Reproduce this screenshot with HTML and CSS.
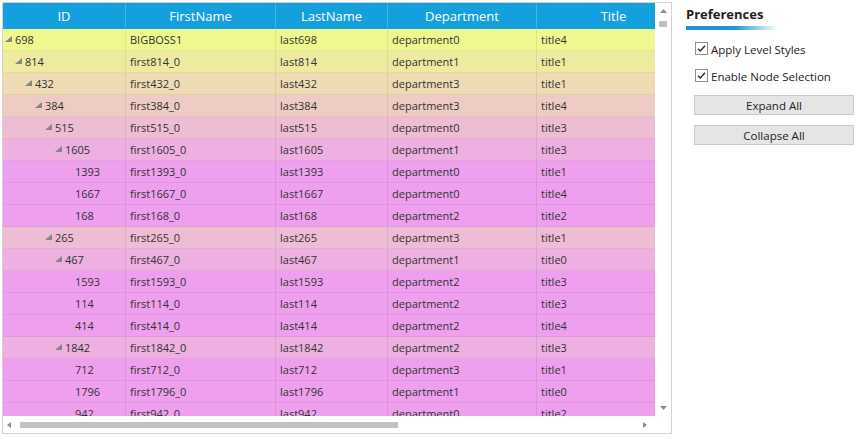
FILE: index.html
```html
<!DOCTYPE html>
<html>
<head>
<meta charset="utf-8">
<link rel="stylesheet" href="styles.css">
</head>
<body>
<div class="app">
  <div class="grid">
    <div class="viewport">
      <div class="hdr">
        <div class="c w1">ID</div>
        <div class="c w2">FirstName</div>
        <div class="c w3">LastName</div>
        <div class="c w4">Department</div>
        <div class="c w5">Title</div>
      </div>
      <div class="row l0"><div class="c w1 idc"><span class="exp"><svg width="7" height="6" viewBox="0 0 7 6"><polygon points="7,0 7,6 0,6"/></svg></span>698</div><div class="c w2">BIGBOSS1</div><div class="c w3">last698</div><div class="c w4">department0</div><div class="c w5">title4</div></div>
      <div class="row l1"><div class="c w1 idc"><span class="exp"><svg width="7" height="6" viewBox="0 0 7 6"><polygon points="7,0 7,6 0,6"/></svg></span>814</div><div class="c w2">first814_0</div><div class="c w3">last814</div><div class="c w4">department1</div><div class="c w5">title1</div></div>
      <div class="row l2"><div class="c w1 idc"><span class="exp"><svg width="7" height="6" viewBox="0 0 7 6"><polygon points="7,0 7,6 0,6"/></svg></span>432</div><div class="c w2">first432_0</div><div class="c w3">last432</div><div class="c w4">department3</div><div class="c w5">title1</div></div>
      <div class="row l3"><div class="c w1 idc"><span class="exp"><svg width="7" height="6" viewBox="0 0 7 6"><polygon points="7,0 7,6 0,6"/></svg></span>384</div><div class="c w2">first384_0</div><div class="c w3">last384</div><div class="c w4">department3</div><div class="c w5">title4</div></div>
      <div class="row l4"><div class="c w1 idc"><span class="exp"><svg width="7" height="6" viewBox="0 0 7 6"><polygon points="7,0 7,6 0,6"/></svg></span>515</div><div class="c w2">first515_0</div><div class="c w3">last515</div><div class="c w4">department0</div><div class="c w5">title3</div></div>
      <div class="row l5"><div class="c w1 idc"><span class="exp"><svg width="7" height="6" viewBox="0 0 7 6"><polygon points="7,0 7,6 0,6"/></svg></span>1605</div><div class="c w2">first1605_0</div><div class="c w3">last1605</div><div class="c w4">department1</div><div class="c w5">title3</div></div>
      <div class="row l6"><div class="c w1 idc"><span class="exp"></span>1393</div><div class="c w2">first1393_0</div><div class="c w3">last1393</div><div class="c w4">department0</div><div class="c w5">title1</div></div>
      <div class="row l6"><div class="c w1 idc"><span class="exp"></span>1667</div><div class="c w2">first1667_0</div><div class="c w3">last1667</div><div class="c w4">department0</div><div class="c w5">title4</div></div>
      <div class="row l6"><div class="c w1 idc"><span class="exp"></span>168</div><div class="c w2">first168_0</div><div class="c w3">last168</div><div class="c w4">department2</div><div class="c w5">title2</div></div>
      <div class="row l4"><div class="c w1 idc"><span class="exp"><svg width="7" height="6" viewBox="0 0 7 6"><polygon points="7,0 7,6 0,6"/></svg></span>265</div><div class="c w2">first265_0</div><div class="c w3">last265</div><div class="c w4">department3</div><div class="c w5">title1</div></div>
      <div class="row l5"><div class="c w1 idc"><span class="exp"><svg width="7" height="6" viewBox="0 0 7 6"><polygon points="7,0 7,6 0,6"/></svg></span>467</div><div class="c w2">first467_0</div><div class="c w3">last467</div><div class="c w4">department1</div><div class="c w5">title0</div></div>
      <div class="row l6"><div class="c w1 idc"><span class="exp"></span>1593</div><div class="c w2">first1593_0</div><div class="c w3">last1593</div><div class="c w4">department2</div><div class="c w5">title3</div></div>
      <div class="row l6"><div class="c w1 idc"><span class="exp"></span>114</div><div class="c w2">first114_0</div><div class="c w3">last114</div><div class="c w4">department2</div><div class="c w5">title3</div></div>
      <div class="row l6"><div class="c w1 idc"><span class="exp"></span>414</div><div class="c w2">first414_0</div><div class="c w3">last414</div><div class="c w4">department2</div><div class="c w5">title4</div></div>
      <div class="row l5"><div class="c w1 idc"><span class="exp"><svg width="7" height="6" viewBox="0 0 7 6"><polygon points="7,0 7,6 0,6"/></svg></span>1842</div><div class="c w2">first1842_0</div><div class="c w3">last1842</div><div class="c w4">department2</div><div class="c w5">title3</div></div>
      <div class="row l6"><div class="c w1 idc"><span class="exp"></span>712</div><div class="c w2">first712_0</div><div class="c w3">last712</div><div class="c w4">department3</div><div class="c w5">title1</div></div>
      <div class="row l6"><div class="c w1 idc"><span class="exp"></span>1796</div><div class="c w2">first1796_0</div><div class="c w3">last1796</div><div class="c w4">department1</div><div class="c w5">title0</div></div>
      <div class="row l6"><div class="c w1 idc"><span class="exp"></span>942</div><div class="c w2">first942_0</div><div class="c w3">last942</div><div class="c w4">department0</div><div class="c w5">title2</div></div>
    </div>
    <div class="vscroll">
      <div class="sbtn"><svg width="7" height="4" viewBox="0 0 7 4"><polygon points="0,4 3.5,0 7,4"/></svg></div>
      <div class="vthumb"></div>
      <div class="spacer"></div>
      <div class="sbtn"><svg width="7" height="4" viewBox="0 0 7 4"><polygon points="0,0 7,0 3.5,4"/></svg></div>
    </div>
    <div class="hscroll">
      <div class="hbtn-l"><svg width="4" height="6" viewBox="0 0 4 6"><polygon points="4,0 4,6 0,3"/></svg></div>
      <div class="hthumb"></div>
      <div class="spacer"></div>
      <div class="hbtn-r"><svg width="4" height="6" viewBox="0 0 4 6"><polygon points="0,0 4,3 0,6"/></svg></div>
    </div>
    <div class="corner"></div>
  </div>
  <div class="panel">
    <div class="ptitle">Preferences</div>
    <div class="pbar"></div>
    <label class="chk first">
      <svg class="box" width="13" height="13" viewBox="0 0 13 13"><rect x="0.5" y="0.5" width="12" height="12" fill="#fff" stroke="#8e8e8e"/><path d="M3 6.8 L5.3 9 L10 3.8" fill="none" stroke="#2b2b2b" stroke-width="1.4"/></svg>
      <span>Apply Level Styles</span>
    </label>
    <label class="chk">
      <svg class="box" width="13" height="13" viewBox="0 0 13 13"><rect x="0.5" y="0.5" width="12" height="12" fill="#fff" stroke="#8e8e8e"/><path d="M3 6.8 L5.3 9 L10 3.8" fill="none" stroke="#2b2b2b" stroke-width="1.4"/></svg>
      <span>Enable Node Selection</span>
    </label>
    <div class="btn">Expand All</div>
    <div class="btn">Collapse All</div>
  </div>
</div>
</body>
</html>
```
FILE: styles.css
```css
html, body {
  margin: 0;
  padding: 0;
  background: #fff;
}
body {
  font-family: "Open Sans", "Noto Sans", sans-serif;
  color: #333;
}
.app {
  display: flex;
  align-items: flex-start;
  padding: 2px 0 0 2px;
}
.grid {
  width: 668px;
  height: 430px;
  border: 1px solid #d3d3d3;
  display: grid;
  grid-template-columns: 652px 16px;
  grid-template-rows: 413px 17px;
  flex: none;
}
.viewport {
  overflow: hidden;
}
.hdr {
  display: flex;
  height: 26px;
  width: max-content;
  background: #14a0dc;
  color: #fff;
  font-size: 13px;
}
.row {
  display: flex;
  height: 22px;
  width: max-content;
  box-sizing: border-box;
  border-bottom: 1px solid rgba(0, 0, 0, 0.06);
  font-size: 11px;
}
.c {
  flex: none;
  box-sizing: border-box;
  display: flex;
  align-items: center;
  white-space: nowrap;
  overflow: hidden;
  padding-left: 4px;
  border-right: 1px solid rgba(0, 0, 0, 0.07);
}
.hdr .c {
  justify-content: center;
  padding-left: 0;
  border-right: 1px solid rgba(255, 255, 255, 0.22);
}
.w1 { width: 123px; }
.w2 { width: 150px; }
.w3 { width: 112px; }
.w4 { width: 149px; }
.w5 { width: 154px; }
.exp {
  flex: none;
  width: 10px;
  display: flex;
  align-items: center;
}
.exp svg {
  display: block;
  margin-bottom: 2px;
  fill: #868686;
}
.l0 { background: #eef88f; }
.l1 { background: #eeeaa0; }
.l2 { background: #eedbb3; }
.l3 { background: #eeccc3; }
.l4 { background: #eebdd4; }
.l5 { background: #eeafe1; }
.l6 { background: #eea0ee; }
.l0 .idc { padding-left: 2px; }
.l1 .idc { padding-left: 12px; }
.l2 .idc { padding-left: 22px; }
.l3 .idc { padding-left: 32px; }
.l4 .idc { padding-left: 42px; }
.l5 .idc { padding-left: 52px; }
.l6 .idc { padding-left: 62px; }

.vscroll {
  display: flex;
  flex-direction: column;
  align-items: center;
  background: #fff;
}
.sbtn {
  height: 16px;
  width: 16px;
  display: flex;
  align-items: center;
  justify-content: center;
}
.sbtn svg, .hbtn-l svg, .hbtn-r svg {
  display: block;
  fill: #8c8c8c;
}
.vthumb {
  width: 8px;
  height: 6px;
  margin-top: 2px;
  background: #c2c2c2;
}
.spacer {
  flex: 1;
}
.hscroll {
  display: flex;
  align-items: center;
  background: #fff;
}
.hbtn-l {
  width: 17px;
  display: flex;
  padding-left: 4px;
  box-sizing: border-box;
}
.hthumb {
  width: 378px;
  height: 6px;
  background: #c2c2c2;
}
.hbtn-r {
  display: flex;
  margin-right: 8px;
}
.corner {
  background: #fff;
}

.panel {
  margin-left: 14px;
  width: 168px;
  display: flex;
  flex-direction: column;
}
.ptitle {
  font-weight: 700;
  font-size: 13px;
  line-height: 18px;
  margin-top: 3px;
  color: #222;
}
.pbar {
  margin-top: 3px;
  width: 92px;
  height: 4px;
  background: linear-gradient(to right, #1797d6 0%, #1797d6 52%, rgba(23, 151, 214, 0) 100%);
}
.chk {
  display: flex;
  align-items: flex-start;
  margin-top: 11px;
  margin-left: 9px;
  font-size: 11.5px;
  line-height: 16px;
  color: #222;
}
.chk.first {
  margin-top: 12px;
}
.chk .box {
  display: block;
  flex: none;
  margin-right: 3px;
}
.btn {
  margin-left: 8px;
  margin-top: 10px;
  width: 160px;
  height: 20px;
  box-sizing: border-box;
  border: 1px solid #cacaca;
  background: #e5e5e5;
  font-size: 11.5px;
  color: #222;
  display: flex;
  align-items: center;
  justify-content: center;
}
```
